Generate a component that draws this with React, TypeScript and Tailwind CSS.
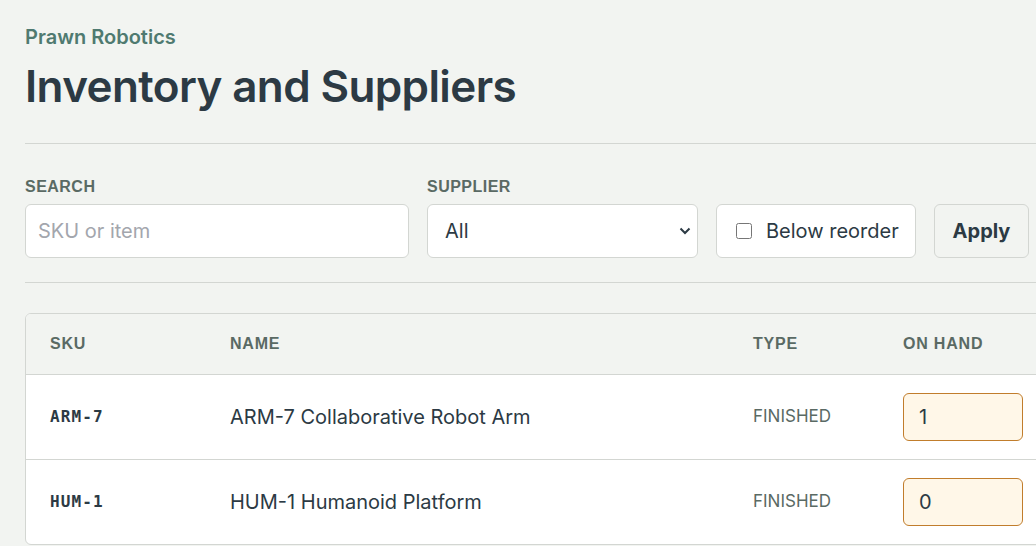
import React from "react";

const rows = [
  { sku: "ARM-7", name: "ARM-7 Collaborative Robot Arm", type: "FINISHED", onHand: "1" },
  { sku: "HUM-1", name: "HUM-1 Humanoid Platform", type: "FINISHED", onHand: "0" },
];

export default function App() {
  return (
    <div className="h-screen w-screen overflow-hidden bg-[#f2f4f1] text-[#2c3a44] [font-family:Inter,'Liberation_Sans',sans-serif]">
      <div className="w-[1200px] pl-[25px] pt-[24px]">
        <div className="text-[20px] font-semibold leading-[26px] text-[#4f7a70]">Prawn Robotics</div>
        <h1 className="mt-[8px] text-[44px] font-semibold leading-[56px] tracking-[-0.014em] text-[#2c3a44]">
          Inventory and Suppliers
        </h1>
        <div className="mt-[29px] border-t border-[#d3d6d2]" />

        <div className="flex items-end gap-[18px] pt-[33px] pb-[24px]">
          <div className="flex flex-col gap-[7px]">
            <label className="text-[16px] font-bold uppercase leading-[20px] tracking-[0.03em] text-[#5a6a64] [font-family:'Liberation_Sans',Arial,sans-serif]">
              Search
            </label>
            <input
              placeholder="SKU or item"
              className="h-[54px] w-[384px] rounded-[6px] border border-[#d3d6d2] bg-white px-[12px] text-[20px] text-[#2c3a44] placeholder-[#a3a6ad] outline-none [font-family:Inter,sans-serif]"
            />
          </div>
          <div className="flex flex-col gap-[7px]">
            <label className="text-[16px] font-bold uppercase leading-[20px] tracking-[0.03em] text-[#5a6a64] [font-family:'Liberation_Sans',Arial,sans-serif]">
              Supplier
            </label>
            <div className="relative">
              <select className="h-[54px] w-[271px] appearance-none rounded-[6px] border border-[#d3d6d2] bg-white px-[17px] text-[20px] text-[#2c3a44] outline-none [font-family:Inter,sans-serif]">
                <option>All</option>
              </select>
              <svg
                className="pointer-events-none absolute right-[7px] top-[22px]"
                width="12"
                height="10"
                viewBox="0 0 12 10"
                fill="none"
              >
                <path d="M1.5 2.5 L6 7 L10.5 2.5" stroke="#2c3a44" strokeWidth="2" />
              </svg>
            </div>
          </div>
          <label className="flex h-[54px] w-[200px] items-center gap-[14px] rounded-[6px] border border-[#d3d6d2] bg-white pl-[19px] text-[20px] text-[#2c3a44]">
            <input type="checkbox" className="h-[16px] w-[16px]" />
            <span>Below reorder</span>
          </label>
          <button className="h-[54px] w-[95px] rounded-[6px] border border-[#d3d6d2] bg-[#f2f4f1] text-[20px] font-bold text-[#2c3a44]">
            Apply
          </button>
        </div>

        <div className="border-t border-[#d3d6d2]" />

        <div className="mt-[30px] overflow-hidden rounded-[6px] border border-[#d3d6d2] bg-white">
          <table className="w-full border-collapse text-left">
            <thead className="bg-[#f2f4f1]">
              <tr className="h-[60px] text-[16px] font-bold uppercase tracking-[0.05em] text-[#5a6a64] [font-family:'Liberation_Sans',Arial,sans-serif]">
                <th className="w-[204px] pl-[24px] font-bold">SKU</th>
                <th className="w-[523px] font-bold">Name</th>
                <th className="w-[150px] font-bold">Type</th>
                <th className="font-bold">On Hand</th>
              </tr>
            </thead>
            <tbody>
              {rows.map((r) => (
                <tr key={r.sku} className="h-[85px] border-t border-[#d3d6d2]">
                  <td className="pl-[24px] text-[16px] font-bold tracking-[1.1px] text-[#2c3a44] [font-family:'DejaVu_Sans_Mono',monospace]">
                    {r.sku}
                  </td>
                  <td className="text-[20px] text-[#2c3a44]">{r.name}</td>
                  <td className="text-[17px] text-[#5a6a64]">{r.type}</td>
                  <td>
                    <input
                      defaultValue={r.onHand}
                      className="h-[48px] w-[120px] rounded-[6px] border border-[#c17d2c] bg-[#fff7e8] px-[15px] text-[20px] text-[#2c3a44] outline-none [font-family:Inter,sans-serif]"
                    />
                  </td>
                </tr>
              ))}
            </tbody>
          </table>
        </div>
      </div>
    </div>
  );
}
